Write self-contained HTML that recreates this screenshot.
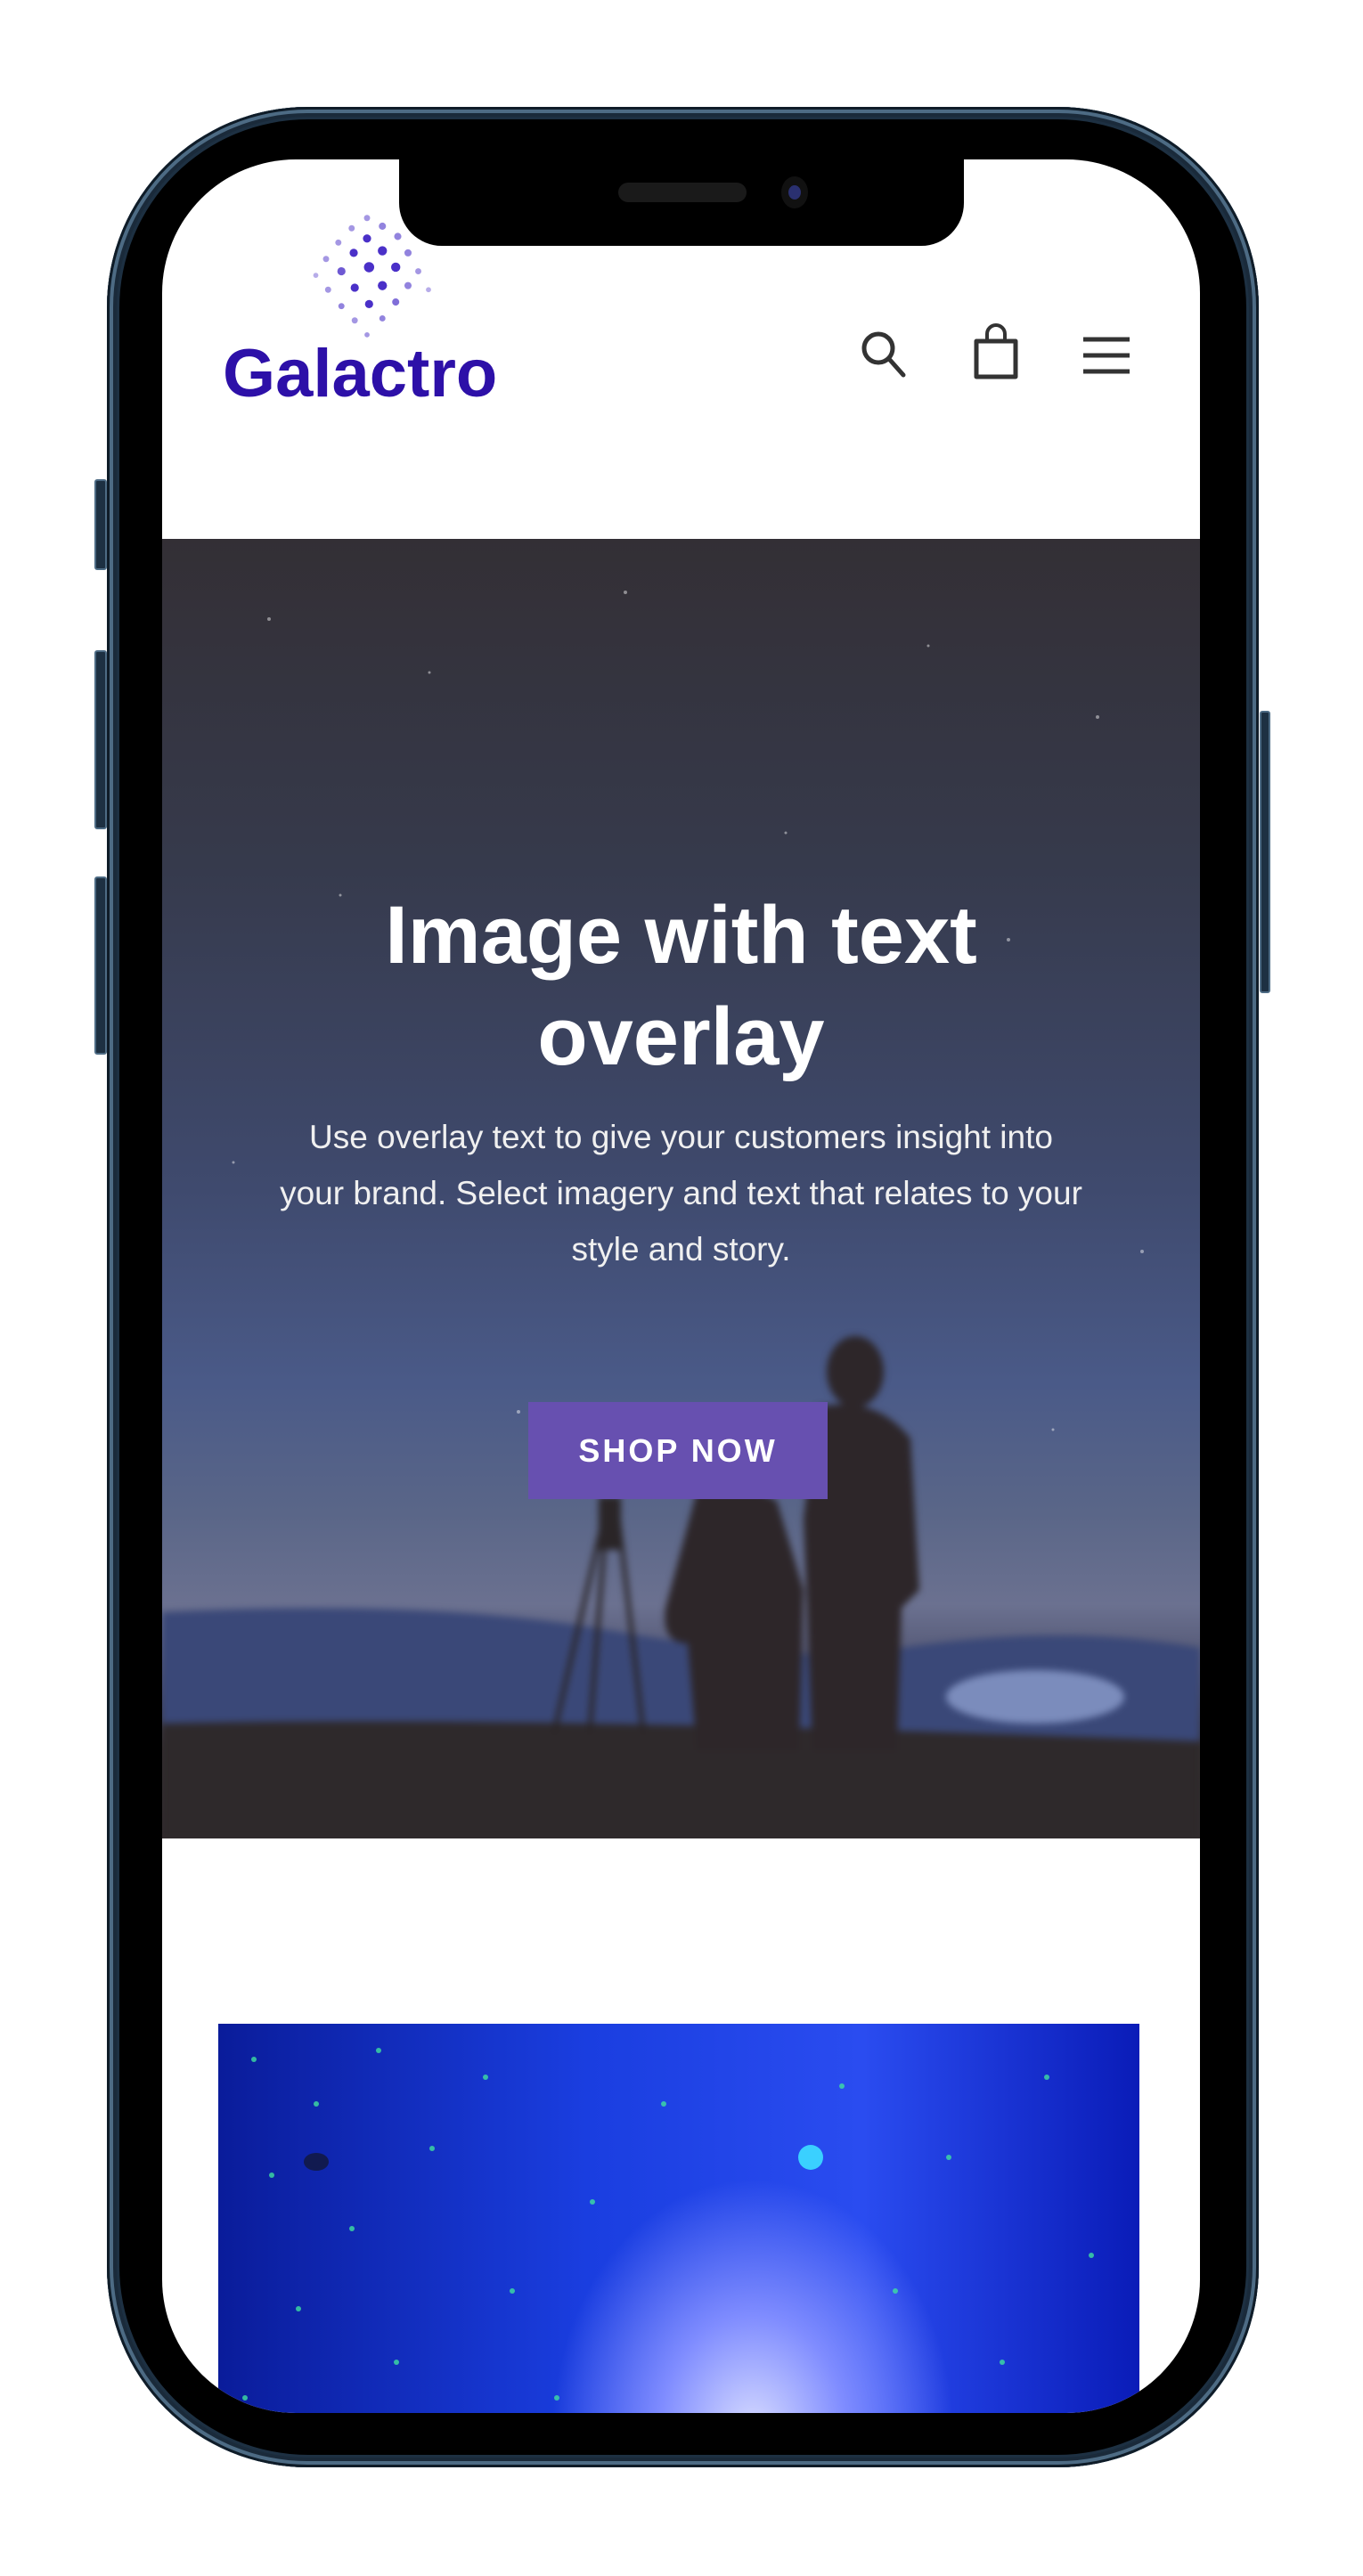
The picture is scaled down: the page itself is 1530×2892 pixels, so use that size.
<!DOCTYPE html>
<html><head><meta charset="utf-8"><style>
html,body{margin:0;padding:0;background:#fff;}
body{width:1530px;height:2892px;position:relative;overflow:hidden;font-family:"Liberation Sans",sans-serif;}
.abs{position:absolute;}
.frame{left:120px;top:120px;width:1293px;height:2650px;border-radius:225px;background:#1d3042;box-shadow:inset 0 0 0 3px #0f1c28,inset 0 0 0 7px #4d6b84,inset 0 0 0 11px #1a2a3a;}
.bezel{left:134px;top:134px;width:1265px;height:2622px;border-radius:212px;background:#000;}
.screen{left:182px;top:179px;width:1165px;height:2530px;border-radius:150px;background:#fff;overflow:hidden;}
.notch{left:448px;top:150px;width:634px;height:126px;background:#000;border-radius:0 0 48px 48px;}
.btn{background:#1d3042;border:2px solid #4d6b84;border-radius:3px;}
</style></head><body>
<div class="abs btn" style="left:106px;top:538px;width:10px;height:98px"></div>
<div class="abs btn" style="left:106px;top:730px;width:10px;height:197px"></div>
<div class="abs btn" style="left:106px;top:984px;width:10px;height:196px"></div>
<div class="abs btn" style="left:1414px;top:798px;width:8px;height:313px"></div>
<div class="abs frame"></div>
<div class="abs bezel"></div>
<div class="abs screen">
  <svg class="abs" style="left:150px;top:64px" width="160" height="130" viewBox="0 0 160 130" transform="scale(1.15)">
    <g fill="#4a30c8">
      <circle cx="80" cy="10" r="3" opacity=".5"/><circle cx="95" cy="18" r="3.5" opacity=".6"/><circle cx="65" cy="20" r="3" opacity=".5"/>
      <circle cx="110" cy="28" r="3.5" opacity=".6"/><circle cx="80" cy="30" r="4"/><circle cx="52" cy="34" r="3" opacity=".5"/>
      <circle cx="120" cy="44" r="3.5" opacity=".6"/><circle cx="95" cy="42" r="4.5"/><circle cx="67" cy="44" r="4"/><circle cx="40" cy="50" r="3" opacity=".5"/>
      <circle cx="108" cy="58" r="4.5"/><circle cx="82" cy="58" r="5"/><circle cx="55" cy="62" r="4" opacity=".8"/><circle cx="130" cy="62" r="3" opacity=".5"/>
      <circle cx="120" cy="76" r="3.5" opacity=".6"/><circle cx="95" cy="76" r="4.5"/><circle cx="68" cy="78" r="4"/><circle cx="42" cy="80" r="3" opacity=".5"/>
      <circle cx="108" cy="92" r="3.5" opacity=".7"/><circle cx="82" cy="94" r="4"/><circle cx="55" cy="96" r="3" opacity=".6"/>
      <circle cx="95" cy="108" r="3" opacity=".6"/><circle cx="68" cy="110" r="3" opacity=".5"/><circle cx="80" cy="124" r="2.5" opacity=".5"/>
      <circle cx="30" cy="66" r="2.5" opacity=".4"/><circle cx="140" cy="80" r="2.5" opacity=".4"/>
    </g>
  </svg>
  <div class="abs" style="left:68px;top:197px;font-size:76px;font-weight:bold;color:#2d10a8;letter-spacing:0px;font-family:'Liberation Sans',sans-serif;">Galactro</div>
  <svg class="abs" style="left:782px;top:190px" width="56" height="60" viewBox="0 0 56 60"><circle cx="22" cy="22" r="16" fill="none" stroke="#333" stroke-width="5"/><line x1="34" y1="34" x2="50" y2="52" stroke="#333" stroke-width="5" stroke-linecap="round"/></svg>
  <svg class="abs" style="left:908px;top:184px" width="56" height="66" viewBox="0 0 56 66"><path d="M6 20 H50 L50 60 H6 Z" fill="none" stroke="#333" stroke-width="5" stroke-linejoin="round"/><path d="M18 22 V12 a10 10 0 0 1 20 0 V22" fill="none" stroke="#333" stroke-width="4"/></svg>
  <svg class="abs" style="left:1032px;top:196px" width="56" height="50" viewBox="0 0 56 50"><g stroke="#333" stroke-width="5"><line x1="2" y1="6" x2="54" y2="6"/><line x1="2" y1="24" x2="54" y2="24"/><line x1="2" y1="42" x2="54" y2="42"/></g></svg>
  <div class="abs" style="left:0;top:426px;width:1165px;height:1459px;background:linear-gradient(#332f35 0%,#363a4c 25%,#3f4a6e 50%,#4a5a88 65%,#5a6688 75%,#6b7190 82%,#4b4e6a 88%,#332e30 93%,#322c2e 100%);overflow:hidden;">
    <svg class="abs" style="left:0;top:0;filter:blur(4px)" width="1165" height="1459" viewBox="0 0 1165 1459">
      <path d="M0 1205 Q300 1190 500 1225 T800 1250 Q1000 1215 1165 1245 V1459 H0Z" fill="#3a4878"/>
      <ellipse cx="980" cy="1300" rx="100" ry="30" fill="#bcd0ff" opacity=".5"/>
      <path d="M0 1330 Q400 1320 1165 1350 V1459 H0Z" fill="#2e292b"/>
      <g stroke="#2a2527" stroke-width="5" fill="none"><line x1="500" y1="1080" x2="440" y2="1340"/><line x1="510" y1="1080" x2="540" y2="1340"/><line x1="500" y1="1080" x2="480" y2="1340"/></g>
      <rect x="490" y="1075" width="25" height="60" fill="#2a2527"/>
      <path d="M600 1070 Q640 1050 690 1080 L720 1180 L715 1360 H600 L590 1240 Q560 1240 565 1200 Z" fill="#2d2629"/>
      <ellipse cx="778" cy="935" rx="32" ry="40" fill="#2d2629"/>
      <path d="M735 975 Q800 960 840 1010 L850 1180 L830 1200 L825 1360 H730 L720 1100 Z" fill="#2d2629"/>
    </svg>
    <svg class="abs" style="left:0;top:0" width="1165" height="1459"><g fill="#fff" opacity=".45">
        <circle cx="120" cy="90" r="2"/><circle cx="300" cy="150" r="1.5"/><circle cx="520" cy="60" r="2"/><circle cx="860" cy="120" r="1.5"/><circle cx="1050" cy="200" r="2"/><circle cx="200" cy="400" r="1.5"/><circle cx="950" cy="450" r="2"/><circle cx="80" cy="700" r="1.5"/><circle cx="1100" cy="800" r="2"/><circle cx="700" cy="330" r="1.5"/><circle cx="400" cy="980" r="2"/><circle cx="1000" cy="1000" r="1.5"/>
      </g></svg>
    <div class="abs" style="left:0;width:1165px;top:388px;text-align:center;color:#fff;font-weight:bold;font-size:92px;line-height:114px;">Image with text<br>overlay</div>
    <div class="abs" style="left:70px;width:1025px;top:640px;text-align:center;color:#f0f0f0;font-size:37px;line-height:63px;">Use overlay text to give your customers insight into<br>your brand. Select imagery and text that relates to your<br>style and story.</div>
    <div class="abs" style="left:411px;top:969px;width:336px;height:109px;background:#6750b0;color:#fff;font-weight:bold;font-size:36px;letter-spacing:3px;line-height:109px;text-align:center;">SHOP NOW</div>
  </div>
  <div class="abs" style="left:63px;top:2093px;width:1034px;height:460px;background:radial-gradient(ellipse 300px 380px at 600px 460px,#d8dcff 0%,#7f8cff 35%,rgba(40,60,240,0) 75%),linear-gradient(90deg,#0a1c9a 0%,#1a3ee0 40%,#2a4cf0 70%,#0a1cb8 100%);overflow:hidden;">
    <svg width="1034" height="460" viewBox="0 0 1034 460"><g fill="#3fe0a0" opacity=".8">
      <circle cx="40" cy="40" r="3"/><circle cx="110" cy="90" r="3"/><circle cx="180" cy="30" r="3"/><circle cx="60" cy="170" r="3"/><circle cx="150" cy="230" r="3"/><circle cx="240" cy="140" r="3"/><circle cx="300" cy="60" r="3"/><circle cx="90" cy="320" r="3"/><circle cx="200" cy="380" r="3"/><circle cx="330" cy="300" r="3"/><circle cx="420" cy="200" r="3"/><circle cx="500" cy="90" r="3"/><circle cx="700" cy="70" r="3"/><circle cx="820" cy="150" r="3"/><circle cx="930" cy="60" r="3"/><circle cx="980" cy="260" r="3"/><circle cx="880" cy="380" r="3"/><circle cx="760" cy="300" r="3"/><circle cx="30" cy="420" r="3"/><circle cx="380" cy="420" r="3"/></g>
      <ellipse cx="110" cy="155" rx="14" ry="10" fill="#111a50"/>
      <circle cx="665" cy="150" r="14" fill="#3ad0ff"/></svg>
  </div>
</div>
<div class="abs notch"></div>
<div class="abs" style="left:694px;top:205px;width:144px;height:22px;border-radius:11px;background:#1a1a1a;"></div>
<div class="abs" style="left:877px;top:198px;width:30px;height:36px;border-radius:50%;background:#111;"></div>
<div class="abs" style="left:885px;top:208px;width:14px;height:16px;border-radius:50%;background:#2a3070;"></div>
</body></html>
